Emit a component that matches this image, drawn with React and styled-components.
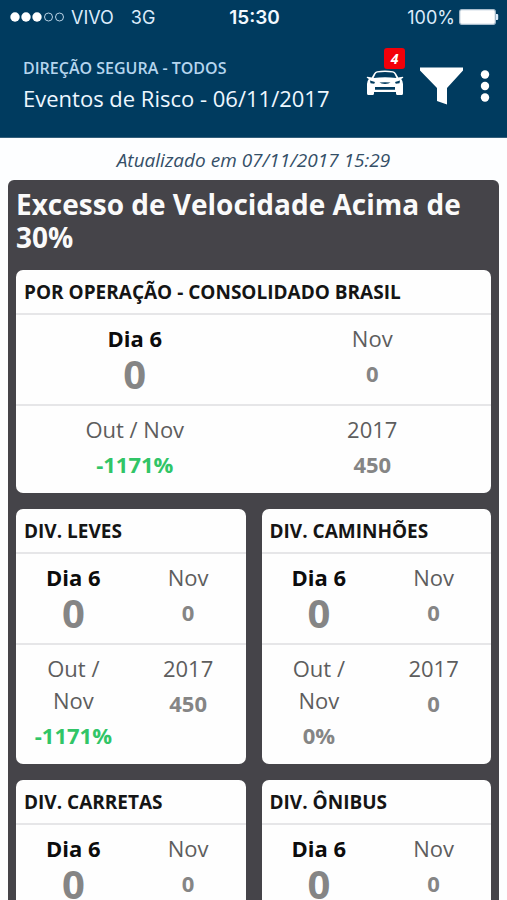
import styled, { createGlobalStyle } from "styled-components";

const GlobalStyle = createGlobalStyle`
    * {
        box-sizing: border-box;
    }
    html {
        scrollbar-width: none;
    }
    body {
        margin: 0;
        background-color: #fdfeff;
        font-family: "Open Sans", "Noto Sans", sans-serif;
    }
`;

// Top part
const Top = styled.header`
    background-color: #003b5f;
    color: #eef7ff;
    padding-bottom: 13px;
    border-bottom: 1px solid #345f7b;
`;

const StatusBar = styled.div`
    display: grid;
    grid-template-columns: 1fr auto 1fr;
    align-items: center;
    height: 34px;
    padding: 0 8px 0 10px;
    font-family: Inter, "Liberation Sans", sans-serif;
    font-size: 18px;
    color: #dcecfb;
`;

const StatusSide = styled.div`
    display: flex;
    align-items: center;
    justify-content: ${(props) => (props.$end ? "flex-end" : "flex-start")};
    gap: ${(props) => (props.$end ? "4px" : "7px")};
`;

const Network = styled.span`
    margin-left: 10px;
`;

const Clock = styled.time`
    font-size: 19px;
    font-weight: 600;
    color: #f2f9ff;
`;

const NavBar = styled.div`
    display: flex;
    justify-content: space-between;
    padding: 14px 17px 0 23px;
`;

const Heading = styled.div`
    padding-top: 8px;
`;

const Section = styled.div`
    font-size: 16px;
    font-weight: 600;
    line-height: 24px;
    color: #b5d5ee;
`;

const PageTitle = styled.h1`
    margin: 3px 0 0;
    font-size: 22px;
    font-weight: 400;
    line-height: 30px;
`;

const Actions = styled.div`
    display: flex;
    align-items: center;
    gap: 16px;
    height: 76px;
`;

const IconButton = styled.button`
    position: relative;
    display: flex;
    padding: 0;
    border: none;
    background: none;
    color: white;
    cursor: pointer;
`;

const Badge = styled.span`
    position: absolute;
    top: -22px;
    right: -1px;
    width: 21px;
    height: 21px;
    border-radius: 3px;
    background-color: #f20009;
    font-family: "Open Sans", sans-serif;
    font-size: 14px;
    font-style: italic;
    font-weight: 700;
    line-height: 21px;
    text-align: center;
`;

// Content part
const Updated = styled.p`
    margin: 0;
    padding: 6px 0 4px;
    font-size: 19px;
    font-style: italic;
    line-height: 32px;
    text-align: center;
    color: #344f67;
`;

const Panel = styled.main`
    margin: 0 8px;
    padding: 8px 8px 16px;
    border-radius: 6px;
    background-color: #454449;
`;

const PanelTitle = styled.h2`
    margin: 0 0 16px;
    font-size: 28px;
    font-weight: 700;
    line-height: 33px;
    color: #fafafa;
`;

const Grid = styled.div`
    display: grid;
    grid-template-columns: 1fr 1fr;
    gap: 16px;
`;

const Card = styled.section`
    grid-column: ${(props) => (props.$wide ? "1 / -1" : "auto")};
    border-radius: 7px;
    background-color: #fefefe;
`;

const CardTitle = styled.h3`
    margin: 0;
    padding: 2px 8px 1px;
    font-size: 19px;
    font-weight: 700;
    line-height: 40px;
    color: #151515;
`;

const Row = styled.dl`
    display: grid;
    grid-template-columns: 1fr 1fr;
    margin: 0;
    padding: 7px 0 10px;
    border-top: 2px solid #e6e6e8;
`;

const Cell = styled.div`
    padding: 0 16px;
    text-align: center;
`;

const Label = styled.dt`
    font-size: 22px;
    font-weight: ${(props) => (props.$strong ? 700 : 400)};
    line-height: 32px;
    color: ${(props) => (props.$strong ? "#0c0c0c" : "#5d5d5d")};
`;

const Value = styled.dd`
    margin: 0;
    font-size: ${(props) => (props.$big ? "40px" : "22px")};
    font-weight: 700;
    line-height: ${(props) => (props.$big ? "40px" : "38px")};
    color: ${(props) => (props.$good ? "#31c567" : "#858585")};
`;

const Signal = () => (
    <svg width="54" height="12" viewBox="0 0 54 12" role="img" aria-label="Sinal">
        {[5, 16, 27].map((x) => (
            <circle key={x} cx={x} cy="6" r="4.7" fill="#fff" />
        ))}
        {[38.5, 49.5].map((x) => (
            <circle key={x} cx={x} cy="6" r="4" fill="none" stroke="#b9d2e5" strokeWidth="1" />
        ))}
    </svg>
);

const Battery = () => (
    <svg width="40" height="16" viewBox="0 0 40 16" role="img" aria-label="Bateria">
        <rect x="0.7" y="0.7" width="35.6" height="14.6" rx="2" fill="#fff" stroke="#a9bdcd" strokeWidth="1.2" />
        <path d="M37 5h1.2q1 0 1 1v4q0 1-1 1H37z" fill="#dcecfb" />
    </svg>
);

const CarIcon = () => (
    <svg width="38" height="32" viewBox="0 0 38 32" fill="#fff">
        <path d="M11 1.2Q19 0 27 1.2q2 .4 3 2.2l2.3 4.200 4.200-.9q1 0 .7 1l-2 1.200Q37 11 37 14v9.500q0 1.500-1.500 1.500h-4q-1.500 0-1.500-1.500V22H8v1.500Q8 25 6.500 25h-4Q1 25 1 23.500V14q0-3 1.800-5.100l-2-1.200q-.3-1 .7-1l4.200.9L8 3.400q1-1.800 3-2.200z" />
        <path d="M11.500 2.500Q19 1.400 26.500 2.500q1.300.2 2 1.600l1.900 3.800Q19 6.600 7.600 7.900l1.900-3.800q.7-1.400 2-1.600z" fill="#003b5f" />
        <path d="M4 10.500l5 1.500-.8 1.800-3.700-.5zM34 10.500L29 12l.8 1.800 3.700-.5zM13.500 12.500q5.500-.7 11 0-1.500 1.400-5.500 1.400t-5.500-1.400zM9 17h20v2.800H9z" fill="#003b5f" />
    </svg>
);

const FilterIcon = () => (
    <svg width="44" height="38" viewBox="0 0 44 38" fill="#fff">
        <path d="M0 .500h43v3L27 21v16.500L17 34V21L0 3.500z" />
    </svg>
);

const MenuIcon = () => (
    <svg width="10" height="34" viewBox="0 0 10 34" fill="#fff">
        <circle cx="5" cy="5.500" r="4.200" />
        <circle cx="5" cy="17" r="4.200" />
        <circle cx="5" cy="28.500" r="4.200" />
    </svg>
);

const cards = [
    { title: "POR OPERAÇÃO - CONSOLIDADO BRASIL", wide: true, day: "0", month: "0", change: "-1171%", year: "450" },
    { title: "DIV. LEVES", day: "0", month: "0", change: "-1171%", year: "450" },
    { title: "DIV. CAMINHÕES", day: "0", month: "0", change: "0%", year: "0" },
    { title: "DIV. CARRETAS", day: "0", month: "0", change: "0%", year: "0" },
    { title: "DIV. ÔNIBUS", day: "0", month: "0", change: "0%", year: "0" },
];

const EventCard = ({ card }) => (
    <Card $wide={card.wide}>
        <CardTitle>{card.title}</CardTitle>
        <Row>
            <Cell>
                <Label $strong>Dia 6</Label>
                <Value $big>{card.day}</Value>
            </Cell>
            <Cell>
                <Label>Nov</Label>
                <Value>{card.month}</Value>
            </Cell>
        </Row>
        <Row>
            <Cell>
                <Label>Out / Nov</Label>
                <Value $good={card.change.startsWith("-")}>{card.change}</Value>
            </Cell>
            <Cell>
                <Label>2017</Label>
                <Value>{card.year}</Value>
            </Cell>
        </Row>
    </Card>
);

const App = () => {
    return (
        <>
            <GlobalStyle />
            <Top>
                <StatusBar>
                    <StatusSide>
                        <Signal />
                        <span>VIVO</span>
                        <Network>3G</Network>
                    </StatusSide>
                    <Clock>15:30</Clock>
                    <StatusSide $end>
                        <span>100%</span>
                        <Battery />
                    </StatusSide>
                </StatusBar>
                <NavBar>
                    <Heading>
                        <Section>DIREÇÃO SEGURA - TODOS</Section>
                        <PageTitle>Eventos de Risco - 06/11/2017</PageTitle>
                    </Heading>
                    <Actions>
                        <IconButton aria-label="Veículos">
                            <CarIcon />
                            <Badge>4</Badge>
                        </IconButton>
                        <IconButton aria-label="Filtrar">
                            <FilterIcon />
                        </IconButton>
                        <IconButton aria-label="Menu">
                            <MenuIcon />
                        </IconButton>
                    </Actions>
                </NavBar>
            </Top>
            <Updated>Atualizado em 07/11/2017 15:29</Updated>
            <Panel>
                <PanelTitle>Excesso de Velocidade Acima de 30%</PanelTitle>
                <Grid>
                    {cards.map((card) => (
                        <EventCard key={card.title} card={card} />
                    ))}
                </Grid>
            </Panel>
        </>
    );
};

export default App;
